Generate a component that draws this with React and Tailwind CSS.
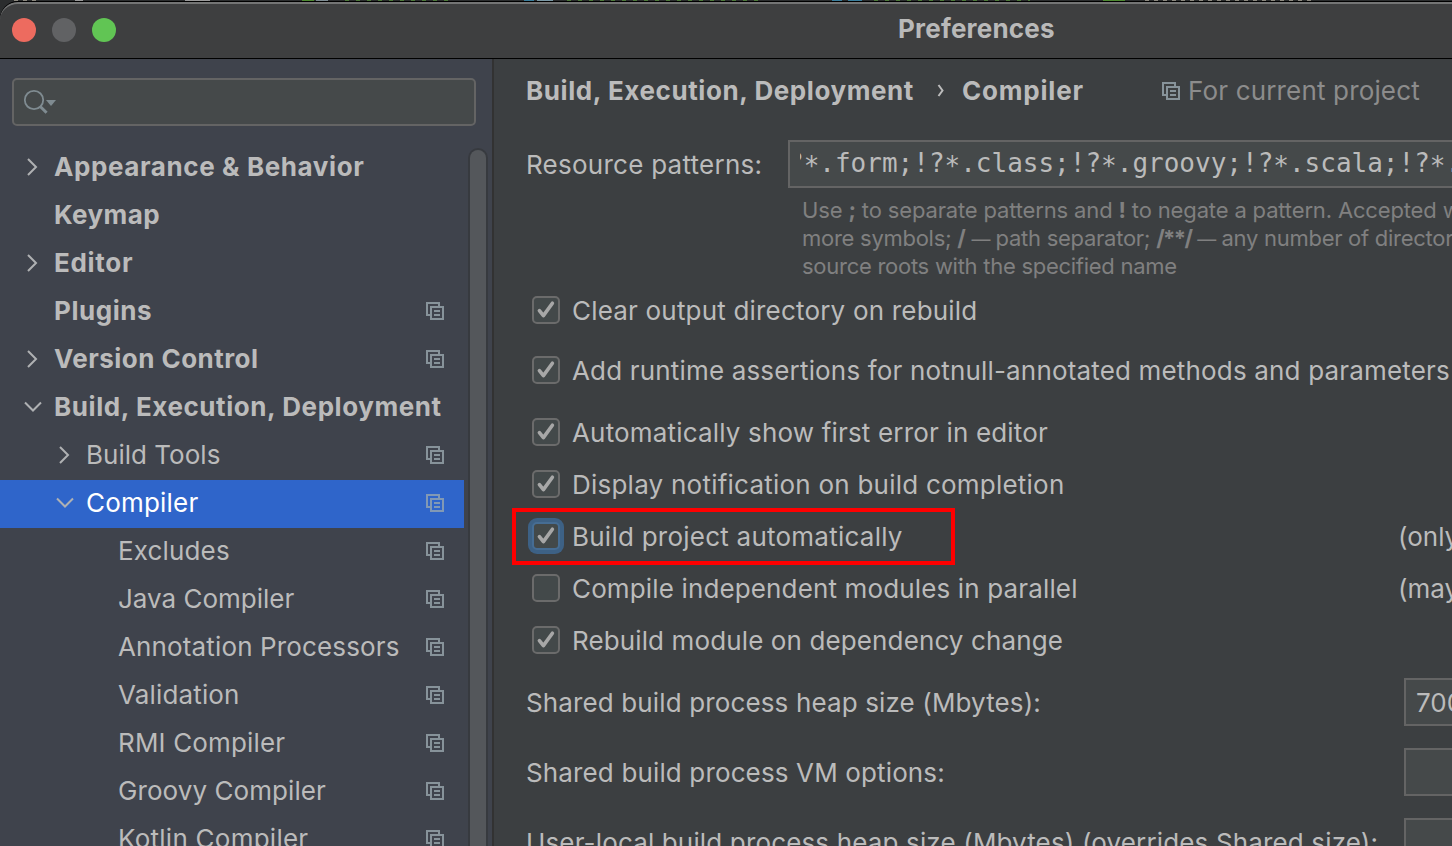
import { Fragment } from "react";

function ScopeIcon({ className }) {
  return (
    <svg className={`shrink-0 ${className}`} width="18" height="18" viewBox="0 0 18 18" fill="none" stroke="currentColor" strokeWidth="2">
      <path d="M13 4V1H1v12h3" />
      <path d="M5 5h12v12H5z" />
      <path d="M8 9h6M8 13h6" />
    </svg>
  );
}

function Chevron({ open }) {
  return (
    <svg className="mb-[2px] ml-px shrink-0 text-[#afb1b3]" width="20" height="20" viewBox="0 0 20 20" fill="none" stroke="currentColor" strokeWidth="2">
      <path d={open ? "M2 5.5l8 8 8-8" : "M5 2l8 8-8 8"} />
    </svg>
  );
}

const TREE = [
  { label: "Appearance & Behavior", level: 0, state: "closed", tracking: "tracking-[0.6px]" },
  { label: "Keymap", level: 0, tracking: "tracking-[0.42px]" },
  { label: "Editor", level: 0, state: "closed", tracking: "tracking-[0.7px]" },
  { label: "Plugins", level: 0, scoped: true, tracking: "tracking-[0.54px]" },
  { label: "Version Control", level: 0, state: "closed", scoped: true, tracking: "tracking-[0.46px]" },
  { label: "Build, Execution, Deployment", level: 0, state: "open", tracking: "tracking-[0.57px]" },
  { label: "Build Tools", level: 1, state: "closed", scoped: true, tracking: "tracking-[0.02px]" },
  { label: "Compiler", level: 1, state: "open", scoped: true, selected: true, tracking: "tracking-[0.2px]" },
  { label: "Excludes", level: 2, scoped: true, tracking: "tracking-[0.15px]" },
  { label: "Java Compiler", level: 2, scoped: true, tracking: "tracking-[0px]" },
  { label: "Annotation Processors", level: 2, scoped: true, tracking: "tracking-[0.14px]" },
  { label: "Validation", level: 2, scoped: true, tracking: "tracking-[0.15px]" },
  { label: "RMI Compiler", level: 2, scoped: true, tracking: "tracking-[0.16px]" },
  { label: "Groovy Compiler", level: 2, scoped: true, tracking: "tracking-[0.08px]" },
  { label: "Kotlin Compiler", level: 2, scoped: true, tracking: "tracking-[0.25px]" },
];

const INDENT = ["pl-[22px]", "pl-[54px]", "pl-[86px]"];

function TreeRow({ label, level, state, scoped, selected, tracking }) {
  return (
    <li className={`flex h-12 w-[464px] shrink-0 items-center pr-5 ${INDENT[level]} ${selected ? "bg-[#2f65ca] text-white" : "text-[#bbbbbb]"} ${level === 0 ? "font-bold" : ""}`}>
      <span className="flex w-8 shrink-0 items-center">{state && <Chevron open={state === "open"} />}</span>
      <span className={`grow whitespace-nowrap pb-[2px] ${tracking}`}>{label}</span>
      {scoped && <ScopeIcon className={`mb-[2px] ${selected ? "text-[#8199b5]" : "text-[#87939a]"}`} />}
    </li>
  );
}

function SearchField() {
  return (
    <div className="flex h-12 w-[464px] items-center rounded-[5px] border-2 border-[#646464] bg-[#45494a] pl-2">
      <svg width="36" height="28" viewBox="0 0 36 28" fill="none">
        <circle cx="12" cy="12" r="9.2" stroke="#7f8b91" strokeWidth="1.8" />
        <path d="M18 18.2l6.6 6.6" stroke="#7f8b91" strokeWidth="3" />
        <path d="M24 12h10l-5 6z" fill="#7f8b91" />
      </svg>
    </div>
  );
}

function Sidebar() {
  return (
    <aside className="flex w-[494px] shrink-0 flex-col border-r-2 border-[#323232] bg-[#3f434c]">
      <div className="pl-3 pt-[19px] pb-[18px]">
        <SearchField />
      </div>
      <div className="flex min-h-0 grow overflow-hidden">
        <ul className="flex w-[468px] shrink-0 flex-col">
          {TREE.map((row) => (
            <TreeRow key={row.label} {...row} />
          ))}
        </ul>
        <div className="mt-1 h-[900px] w-5 shrink-0 rounded-t-[10px] border-2 border-b-0 border-[#373a3f] bg-[#54575b]" />
      </div>
    </aside>
  );
}

function Checkbox({ checked, focused }) {
  return (
    <span className={`flex size-7 shrink-0 items-center justify-center rounded-[5px] border-2 bg-[#43494a] ${focused ? "border-[#466d94] ring-4 ring-[#3d6185]" : "border-[#6b6b6b]"}`}>
      {checked && (
        <svg className="shrink-0" width="24" height="24" viewBox="0 0 24 24" fill="none" stroke="#a7a7a7" strokeWidth="3.6" strokeLinecap="round" strokeLinejoin="round">
          <path d="M5.4 12.6L9.4 17.6 18.4 5.2" />
        </svg>
      )}
    </span>
  );
}

const OPTIONS = [
  { label: "Clear output directory on rebuild", checked: true, height: "h-[60px]", tracking: "tracking-[0.19px]" },
  { label: "Add runtime assertions for notnull-annotated methods and parameters", checked: true, height: "h-[62px]", tracking: "tracking-[0.17px]" },
  { label: "Automatically show first error in editor", checked: true, height: "h-[52px]", tracking: "tracking-[0.17px]" },
  { label: "Display notification on build completion", checked: true, height: "h-[52px]", tracking: "tracking-[0.23px]" },
  { label: "Build project automatically", checked: true, focused: true, note: "(only", height: "h-[52px]", tracking: "tracking-[0.24px]" },
  { label: "Compile independent modules in parallel", note: "(may", height: "h-[52px]", tracking: "tracking-[0.14px]" },
  { label: "Rebuild module on dependency change", checked: true, height: "h-[52px]", tracking: "tracking-[0.12px]" },
];

function OptionRow({ label, checked, focused, note, height, tracking }) {
  return (
    <div className={`relative flex shrink-0 items-start pl-[6px] ${height}`}>
      <Checkbox checked={checked} focused={focused} />
      <span className={`w-[828px] shrink-0 whitespace-nowrap pl-3 leading-[30px] ${tracking}`}>{label}</span>
      {note && <span className="ml-[10px] whitespace-nowrap leading-[30px]">{note}</span>}
      {focused && <span className="absolute -left-[14px] -top-[14px] h-[57px] w-[443px] border-4 border-[#ff0000]" />}
    </div>
  );
}

const FIELDS = [
  { label: "Shared build process heap size (Mbytes):", value: "700", tracking: "tracking-[0.13px]" },
  { label: "Shared build process VM options:", value: "", tracking: "tracking-[0.14px]" },
  { label: "User-local build process heap size (Mbytes) (overrides Shared size):", value: "", tracking: "tracking-[0.15px]" },
];

function FieldRow({ label, value, tracking }) {
  return (
    <div className="flex h-[70px] shrink-0 items-start">
      <span className={`w-[878px] shrink-0 whitespace-nowrap leading-[50px] ${tracking}`}>{label}</span>
      <span className="h-12 w-[300px] shrink-0 border-2 border-[#646464] bg-[#45494a] pl-[10px] leading-[46px]">{value}</span>
    </div>
  );
}

const PATTERN_PARTS = ["?", ".form;!?", ".class;!?", ".groovy;!?", ".scala;!?", "."];

function CompilerPage() {
  return (
    <main className="flex min-w-0 grow flex-col overflow-hidden bg-[#3c3f41] pl-8 text-[#bbbbbb]">
      <header className="flex h-[81px] shrink-0 items-start whitespace-nowrap pt-4 leading-[32px]">
        <h2 className="w-[411px] shrink-0 font-bold tracking-[0.58px]">Build, Execution, Deployment</h2>
        <svg className="mt-[8px] w-[25px] shrink-0" width="25" height="16" viewBox="0 0 25 16" fill="none" stroke="#bbbbbb" strokeWidth="2">
          <path d="M1.5 2L5.5 7.5 1.5 13" />
        </svg>
        <h2 className="w-[200px] shrink-0 font-bold tracking-[0.8px]">Compiler</h2>
        <ScopeIcon className="mt-[7px] text-[#87939a]" />
        <span className="ml-[8px] tracking-[0.16px] text-[#8c8c8c]">For current project</span>
      </header>
      <div className="flex h-12 shrink-0 items-start">
        <span className="w-[262px] shrink-0 whitespace-nowrap leading-[50px] tracking-[0.25px]">Resource patterns:</span>
        <div className="h-12 w-[800px] shrink-0 border-2 border-[#646464] bg-[#45494a] pl-[10px] font-['DejaVu_Sans_Mono',monospace] leading-[42px]">
          <div className="h-11 overflow-hidden whitespace-nowrap">
            <span className="-ml-[12px]">
              {PATTERN_PARTS.map((part, i) => (
                <Fragment key={part}>
                  {i > 0 && <span className="align-[-3px] leading-none">*</span>}
                  {part}
                </Fragment>
              ))}
            </span>
          </div>
        </div>
      </div>
      <div className="ml-[276px] h-[108px] w-[900px] shrink-0 whitespace-nowrap pt-[8px] text-[22px] leading-[28px] text-[#808080]">
        <p className="tracking-[-0.15px]">
          Use <b>;</b> to separate patterns and <b>!</b> to negate a pattern. Accepted w
        </p>
        <p className="tracking-[-0.27px]">
          more symbols; <b>/</b> <span className="text-[19px] leading-none tracking-[-0.8px]">—</span> path separator; <b className="tracking-[-1.6px]">/**/</b>{" "}
          <span className="text-[19px] leading-none tracking-[-0.8px]">—</span> any number of director
        </p>
        <p className="tracking-[-0.27px]">source roots with the specified name</p>
      </div>
      {OPTIONS.map((o) => (
        <OptionRow key={o.label} {...o} />
      ))}
      <div className="shrink-0">
        {FIELDS.map((f) => (
          <FieldRow key={f.label} {...f} />
        ))}
      </div>
    </main>
  );
}

const GREEN_TEXT = "bg-[repeating-linear-gradient(90deg,#4d7a3a_0_4px,#2b2d2e_4px_11px)]";
const LIGHT_TEXT = "bg-[repeating-linear-gradient(90deg,#8d8a80_0_4px,#2b2d2e_4px_9px)]";

function BackgroundTabs() {
  return (
    <div className="flex h-px shrink-0">
      <i className={`ml-[14px] w-[27px] ${LIGHT_TEXT}`} />
      <i className="ml-[34px] w-2 bg-[#9a9a9a]" />
      <i className="ml-[102px] w-[25px] bg-[#9a9a9a]" />
      <i className="ml-[92px] w-3 bg-[#4e8a32]" />
      <i className="ml-[2px] w-3 bg-[#7d8b92]" />
      <i className={`ml-[17px] w-[110px] ${GREEN_TEXT}`} />
      <i className="ml-[69px] w-[10px] bg-[#3a7e9c]" />
      <i className="ml-[3px] w-[16px] bg-[#7a98a5]" />
      <i className={`ml-[14px] w-[198px] ${GREEN_TEXT}`} />
      <i className="ml-[67px] w-[10px] bg-[#3a7e9c]" />
      <i className="ml-[6px] w-[14px] bg-[#3a7e9c]" />
      <i className={`ml-[12px] w-[156px] ${GREEN_TEXT}`} />
      <i className="ml-[73px] w-[22px] bg-[#4e8a32]" />
      <i className={`ml-[20px] w-[170px] ${LIGHT_TEXT}`} />
    </div>
  );
}

export default function App() {
  return (
    <div className="flex h-[846px] w-full flex-col overflow-hidden bg-[#2b2d2e] font-[Inter,sans-serif] text-[26px] leading-[32px]">
      <BackgroundTabs />
      <div className="flex h-[845px] shrink-0 flex-col overflow-hidden rounded-tl-[18px] border-t border-black">
        <div className="flex h-[57px] shrink-0 items-center gap-4 rounded-tl-[18px] border-b border-t-2 border-b-black border-t-[#747575] bg-[#3e3f40] pb-[2px] pl-3">
          <span className="size-6 shrink-0 rounded-full bg-[#ed6b5f]" />
          <span className="size-6 shrink-0 rounded-full bg-[#616264]" />
          <span className="size-6 shrink-0 rounded-full bg-[#61c554]" />
          <h1 className="ml-[766px] pb-[2px] font-bold tracking-[0.2px] text-[#b9b9b9]">Preferences</h1>
        </div>
        <div className="flex min-h-0 grow">
          <Sidebar />
          <CompilerPage />
        </div>
      </div>
    </div>
  );
}
